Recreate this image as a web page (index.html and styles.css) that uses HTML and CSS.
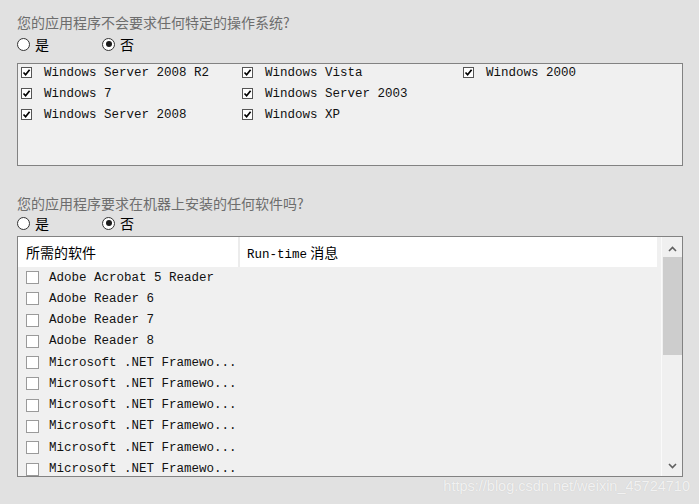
FILE: index.html
```html
<!DOCTYPE html>
<html lang="zh-CN">
<head>
  <meta charset="UTF-8">
  <title>软件要求</title>
  <link rel="stylesheet" href="styles.css">
</head>
<body>
  <p class="question">您的应用程序不会要求任何特定的操作系统?</p>
  <div class="radios">
    <label class="opt"><span class="radio"></span>是</label>
    <label class="opt"><span class="radio on"></span>否</label>
  </div>

  <div class="os-box">
    <div class="os"><span class="tick"><svg viewBox="0 0 9 9"><path d="M1.5 4.5 L3.6 6.8 L7.6 1.8"/></svg></span>Windows Server 2008 R2</div>
    <div class="os"><span class="tick"><svg viewBox="0 0 9 9"><path d="M1.5 4.5 L3.6 6.8 L7.6 1.8"/></svg></span>Windows Vista</div>
    <div class="os"><span class="tick"><svg viewBox="0 0 9 9"><path d="M1.5 4.5 L3.6 6.8 L7.6 1.8"/></svg></span>Windows 2000</div>
    <div class="os"><span class="tick"><svg viewBox="0 0 9 9"><path d="M1.5 4.5 L3.6 6.8 L7.6 1.8"/></svg></span>Windows 7</div>
    <div class="os"><span class="tick"><svg viewBox="0 0 9 9"><path d="M1.5 4.5 L3.6 6.8 L7.6 1.8"/></svg></span>Windows Server 2003</div>
    <div class="os"></div>
    <div class="os"><span class="tick"><svg viewBox="0 0 9 9"><path d="M1.5 4.5 L3.6 6.8 L7.6 1.8"/></svg></span>Windows Server 2008</div>
    <div class="os"><span class="tick"><svg viewBox="0 0 9 9"><path d="M1.5 4.5 L3.6 6.8 L7.6 1.8"/></svg></span>Windows XP</div>
  </div>

  <p class="question q2">您的应用程序要求在机器上安装的任何软件吗?</p>
  <div class="radios tight">
    <label class="opt"><span class="radio"></span>是</label>
    <label class="opt"><span class="radio on"></span>否</label>
  </div>

  <div class="table">
    <div class="list">
      <div class="head">
        <div class="col1">所需的软件</div>
        <div class="col2"><span class="mono">Run-time</span> 消息</div>
      </div>
      <div class="rows">
        <div class="row"><span class="box"></span>Adobe Acrobat 5 Reader</div>
        <div class="row"><span class="box"></span>Adobe Reader 6</div>
        <div class="row"><span class="box"></span>Adobe Reader 7</div>
        <div class="row"><span class="box"></span>Adobe Reader 8</div>
        <div class="row"><span class="box"></span>Microsoft .NET Framewo...</div>
        <div class="row"><span class="box"></span>Microsoft .NET Framewo...</div>
        <div class="row"><span class="box"></span>Microsoft .NET Framewo...</div>
        <div class="row"><span class="box"></span>Microsoft .NET Framewo...</div>
        <div class="row"><span class="box"></span>Microsoft .NET Framewo...</div>
        <div class="row"><span class="box"></span>Microsoft .NET Framewo...</div>
      </div>
    </div>
    <div class="scrollbar">
      <svg class="arrow" viewBox="0 0 9 6"><path d="M1 5 L4.5 1.5 L8 5"/></svg>
      <div class="thumb"></div>
      <div class="track"></div>
      <svg class="arrow" viewBox="0 0 9 6"><path d="M1 1 L4.5 4.5 L8 1"/></svg>
    </div>
  </div>

  <div class="watermark">https://blog.csdn.net/weixin_45724710</div>
</body>
</html>
```

FILE: styles.css
```css
body {
  margin: 0;
  padding: 13px 16px 0 17px;
  background: #e1e1e1;
  font-family: "Noto Sans CJK SC", "Noto Sans", sans-serif;
  font-size: 14px;
  color: #000;
  position: relative;
  height: 491px;
}

.question {
  margin: 0;
  line-height: 18px;
  color: #6d6d6d;
}

.q2 {
  margin-top: 28px;
}

.radios {
  display: flex;
  margin-top: 4px;
  height: 18px;
  line-height: 18px;
}

.radios.tight {
  margin-top: 2px;
}

.opt {
  width: 85px;
  display: flex;
  align-items: center;
  gap: 5px;
}

.radio {
  width: 11px;
  height: 11px;
  border: 1px solid #333;
  border-radius: 50%;
  background: #fff;
  display: flex;
  align-items: center;
  justify-content: center;
}

.radio.on::after {
  content: "";
  width: 6px;
  height: 6px;
  border-radius: 50%;
  background: #1a1a1a;
}

.os-box {
  margin-top: 10px;
  height: 101px;
  border: 1px solid #828282;
  background: #f0f0f0;
  padding: 0 0 0 3px;
  display: grid;
  grid-template-columns: 221px 221px 221px;
  grid-auto-rows: 17px;
  row-gap: 4px;
  align-content: start;
  box-sizing: content-box;
  width: 661px;
}

.os-box .os:first-child,
.os-box .os:nth-child(2),
.os-box .os:nth-child(3) {
  margin-top: 0;
}

.os {
  display: flex;
  align-items: center;
  gap: 12px;
  font-family: "Liberation Mono", monospace;
  font-size: 12.5px;
  color: #111;
  white-space: pre;
}

.tick {
  width: 9px;
  height: 9px;
  border: 1px solid #555;
  background: #fff;
  display: flex;
}

.tick svg {
  width: 9px;
  height: 9px;
}

.tick path {
  fill: none;
  stroke: #000;
  stroke-width: 1.7;
}

.table {
  margin-top: 4px;
  height: 239px;
  border: 1px solid #828282;
  background: #f0f0f0;
  display: flex;
  overflow: hidden;
}

.list {
  flex: 1;
  overflow: hidden;
}

.head {
  display: flex;
  height: 30px;
  margin-right: 4px;
  background: #fff;
  align-items: center;
}

.col1 {
  width: 212px;
  height: 30px;
  line-height: 30px;
  padding-left: 8px;
  border-right: 2px solid #ececec;
}

.col2 {
  padding-left: 7px;
}

.mono {
  font-family: "Liberation Mono", monospace;
  font-size: 12.5px;
}

.row {
  height: 21.28px;
  display: flex;
  align-items: center;
  gap: 10px;
  padding-left: 8px;
  font-family: "Liberation Mono", monospace;
  font-size: 12.5px;
  color: #111;
  white-space: pre;
}

.box {
  width: 11px;
  height: 11px;
  border: 1px solid #9a9a9a;
  background: #fff;
}

.scrollbar {
  width: 20px;
  border-left: 1px solid #fafafa;
  display: flex;
  flex-direction: column;
  align-items: center;
}

.arrow {
  width: 9px;
  height: 6px;
  margin: 9px 0 6px;
  flex: none;
}

.arrow path {
  fill: none;
  stroke: #606060;
  stroke-width: 1.6;
}

.thumb {
  width: 19px;
  height: 98px;
  background: #cdcdcd;
  margin-top: -1px;
}

.track {
  flex: 1;
}

.scrollbar .arrow:last-child {
  margin: 4px 0 7px;
}

.watermark {
  position: absolute;
  right: 9px;
  top: 477px;
  font-family: "Liberation Sans", sans-serif;
  font-size: 14.5px;
  line-height: 18px;
  color: rgba(255, 255, 255, 0.75);
  text-shadow: 0 0 1px rgba(0, 0, 0, 0.12);
}
```
